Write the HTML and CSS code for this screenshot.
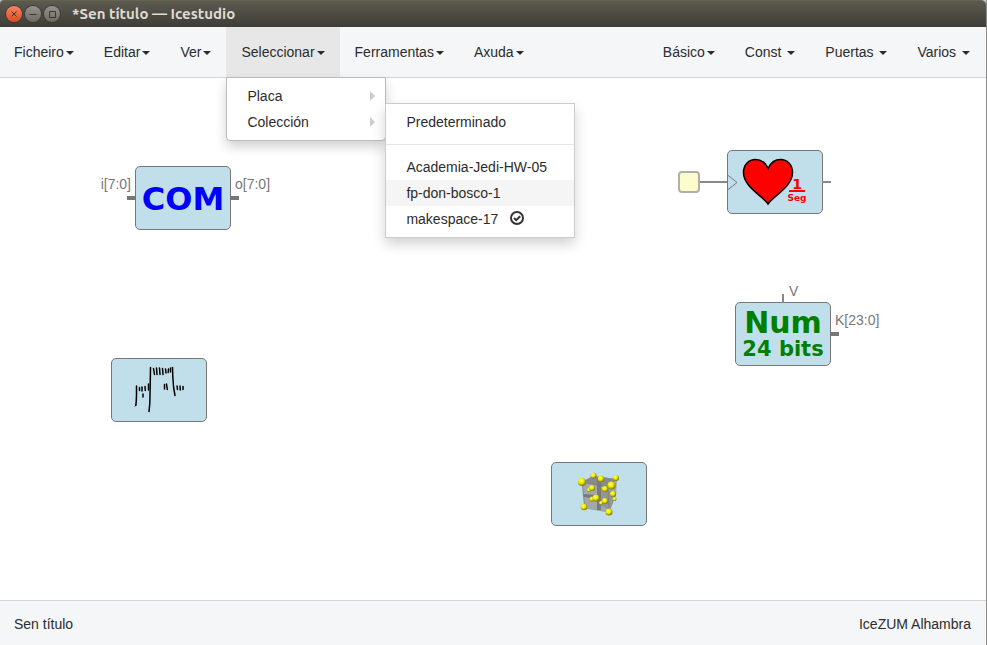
FILE: index.html
```html
<!DOCTYPE html>
<html lang="gl">
<head>
<meta charset="utf-8">
<title>*Sen título — Icestudio</title>
<link rel="stylesheet" href="styles.css">
</head>
<body>
<div class="window">
  <header class="titlebar">
    <button class="win-btn win-close" aria-label="Pechar"><svg viewBox="0 0 16 16"><path d="M5.500 5.500l5 5M10.500 5.500l-5 5"/></svg></button>
    <button class="win-btn" aria-label="Minimizar"><svg viewBox="0 0 16 16"><path d="M4.500 8.500h7"/></svg></button>
    <button class="win-btn" aria-label="Maximizar"><svg viewBox="0 0 16 16"><path d="M5.500 5.500h6v6h-6z"/></svg></button>
    <h1 class="title">*Sen título — Icestudio</h1>
  </header>

  <nav class="navbar">
    <ul class="nav">
      <li><button class="nav-link">Ficheiro<span class="caret"></span></button></li>
      <li><button class="nav-link">Editar<span class="caret"></span></button></li>
      <li><button class="nav-link">Ver<span class="caret"></span></button></li>
      <li class="open">
        <button class="nav-link" aria-expanded="true">Seleccionar<span class="caret"></span></button>
        <ul class="menu menu-main">
          <li><button class="menu-item has-sub">Placa</button></li>
          <li class="sub-host">
            <button class="menu-item has-sub">Colección</button>
            <ul class="menu menu-sub">
              <li><button class="menu-item">Predeterminado</button></li>
              <li class="divider" role="separator"></li>
              <li><button class="menu-item">Academia-Jedi-HW-05</button></li>
              <li><button class="menu-item active">fp-don-bosco-1</button></li>
              <li><button class="menu-item">makespace-17<svg class="check" viewBox="0 0 14 14"><circle cx="7" cy="7" r="6"/><path d="M4 7l2.200 2.200L10.200 5.200"/></svg></button></li>
            </ul>
          </li>
        </ul>
      </li>
      <li><button class="nav-link">Ferramentas<span class="caret"></span></button></li>
      <li><button class="nav-link">Axuda<span class="caret"></span></button></li>
    </ul>
    <ul class="nav">
      <li><button class="nav-link">Básico<span class="caret"></span></button></li>
      <li><button class="nav-link">Const <span class="caret"></span></button></li>
      <li><button class="nav-link">Puertas <span class="caret"></span></button></li>
      <li><button class="nav-link">Varios <span class="caret"></span></button></li>
    </ul>
  </nav>

  <main class="canvas">
    <div class="block block-com">
      <span class="com">COM</span>
      <span class="port port-left bus"></span><span class="port port-right bus"></span>
      <span class="label label-left">i[7:0]</span><span class="label label-right">o[7:0]</span>
    </div>

    <div class="block block-hand">
      <svg class="art" viewBox="0 0 96 64">
        <g fill="none" stroke="#000" stroke-linecap="round" stroke-linejoin="round">
          <path stroke-width="1.500" d="M25.500 28v9l-.3 7-.4 3M39.500 9.500l-.3 18-.4 18-.8 8M61.500 9.500l.3 9 .8 11 1.400 8"/>
          <path stroke-width="1.500" d="M28.500 29.500v3M31 29v4M34 28.500l.3 4M37.500 26v6M32 36v3M42.500 10.500l1 6M45.500 10l.5 6.500M48.500 10l.5 6.500M51.500 10.500l.5 6M54.500 11l.5 4M57.500 11l-.3 3.500M59.500 10v4M53.500 26.500v4.500M55.500 26l.8 5.500M66 28l.5 3.500M69 28l.3 4M72 28.500v3"/>
          <path stroke-width="1" d="M24 48l1.500-1"/>
        </g>
      </svg>
    </div>

    <div class="block block-cube">
      <svg class="art" viewBox="0 0 96 64">
        <defs>
          <radialGradient id="ball" cx=".4" cy=".35" r=".65"><stop offset="0" stop-color="#ffff58"/><stop offset=".5" stop-color="#eee800"/><stop offset="1" stop-color="#777500"/></radialGradient>
        </defs>
        <path fill="#a2a7aa" d="M31 20l11-6 24 3-1 17-7 16-25-5z"/>
        <path fill="#888b8e" d="M31 20l11-6 24 3-9 9z"/>
        <path fill="#777b7e" d="M46 17h4v31h-4zM32 32l14 1v4l-13-2zM49 33l14-1-4 7-10-2z"/>
        <path fill="#929598" d="M50 26l13 4-5 18-8-5z"/>
        <path fill="none" stroke="#777" stroke-width=".6" d="M31 20l26 5 9-9M31 20l3 26 24 4 7-20M57 25l1 24"/>
        <g fill="url(#ball)">
          <circle cx="38" cy="28" r="2"/><circle cx="41" cy="26" r="3"/><circle cx="41" cy="37" r="2.500"/>
          <circle cx="50" cy="41" r="2"/><circle cx="54" cy="39" r="3"/><circle cx="54" cy="27" r="3"/>
          <circle cx="62" cy="32" r="3"/><circle cx="63.500" cy="37" r="2"/><circle cx="42.500" cy="13.500" r="3"/>
          <circle cx="50" cy="17" r="3.200"/><circle cx="65" cy="16" r="3"/><circle cx="31" cy="20" r="4"/>
          <circle cx="60.500" cy="23.500" r="4"/><circle cx="45" cy="36" r="3.500"/><circle cx="33" cy="45" r="3.300"/>
          <circle cx="58" cy="50" r="3.500"/>
        </g>
      </svg>
    </div>

    <span class="wire"></span>
    <span class="source"></span>
    <div class="block block-heart">
      <svg class="art" viewBox="0 0 96 64">
        <path fill="none" stroke="#777" d="M0 24.500l10 8-10 8"/>
        <path fill="#f00" stroke="#000" stroke-width="1.500" d="M41 54C36 46 16.500 37 16.500 22.500C16.500 14.500 22 9.500 28.500 9.500C34 9.500 38.500 13 41 18.500C43.500 13 48 9.500 53.500 9.500C60 9.500 65.500 14.500 65.500 22.500C65.500 37 46 46 41 54z"/>
        <path fill="#f00" d="M62 40h16v2H62z"/>
        <text class="seg-text" x="70" y="39" font-size="14">1</text>
        <text class="seg-text" x="70" y="51" font-size="9">Seg</text>
      </svg>
      <span class="port port-right"></span>
    </div>

    <div class="block block-num">
      <span class="num">Num</span><span class="bits">24 bits</span>
      <span class="port port-top"></span><span class="port port-right bus"></span>
      <span class="label label-top">V</span><span class="label label-right">K[23:0]</span>
    </div>
  </main>

  <footer class="footer"><span>Sen título</span><span>IceZUM Alhambra</span></footer>
</div>
</body>
</html>
```
FILE: styles.css
```css
* { box-sizing: border-box; }
body {
  margin: 0;
  background: #c8c8c8;
  color: #2c2c2c;
  font: 14px/20px "Liberation Sans", Arial, sans-serif;
}
ul { margin: 0; padding: 0; list-style: none; }
button { font: inherit; color: inherit; border: 0; background: none; margin: 0; }

.window {
  display: flex;
  flex-direction: column;
  min-height: 100vh;
  border-right: 1px solid #8c8c8c;
}

.titlebar {
  display: flex;
  align-items: center;
  gap: 3px;
  height: 27px;
  padding: 0 0 1px 6px;
  background: linear-gradient(#5d5b50, #3d3c37);
  border-top: 1px solid #66644f;
  border-radius: 4px 5px 0 0;
}
.win-btn {
  width: 16px;
  height: 16px;
  padding: 0;
  border-radius: 50%;
  background: linear-gradient(#95938b, #6d6b64);
  box-shadow: 0 0 0 1px #3b3a35;
}
.win-close { background: linear-gradient(#f58363, #dd4d20); }
.win-btn svg { display: block; fill: none; stroke: #393832; }
.title {
  margin: 0 0 0 9px;
  color: #dfdbd2;
  font: bold 15px/20px Ubuntu, "Noto Sans", "Open Sans", sans-serif;
}

.navbar {
  display: flex;
  justify-content: space-between;
  background: #f4f6f8;
  border-bottom: 1px solid #d3d6d8;
}
.nav { display: flex; }
.nav:first-child { margin-left: -1px; }
.nav:last-child { margin-right: 1px; }
.open { position: relative; background: #e7e7e7; }
.nav-link { display: block; padding: 15px; white-space: pre; }
.caret {
  display: inline-block;
  vertical-align: middle;
  margin-left: 2px;
  border-top: 4px solid;
  border-left: 4px solid transparent;
  border-right: 4px solid transparent;
}

.menu {
  position: absolute;
  z-index: 2;
  padding: 5px 0;
  background: #fff;
  border: 1px solid #ccc;
  box-shadow: 0 6px 12px rgba(0, 0, 0, .18);
}
.menu-main { top: 100%; left: 0; width: 160px; border-color: #bbb; border-radius: 0 0 4px 4px; }
.menu-sub { top: -6px; left: 100%; width: 190px; }
.sub-host { position: relative; }
.menu-item {
  display: flex;
  align-items: center;
  width: 100%;
  padding: 3px 20px;
  text-align: left;
  white-space: nowrap;
}
.menu-item.active { background: #f5f5f5; }
.has-sub { justify-content: space-between; padding-right: 10px; }
.has-sub::after {
  content: "";
  border-left: 5px solid #ccc;
  border-top: 5px solid transparent;
  border-bottom: 5px solid transparent;
}
.divider { height: 1px; margin: 9px 0; background: #e5e5e5; }
.check { width: 14px; height: 14px; margin: -2px 0 0 12px; fill: none; stroke: #333; stroke-width: 2; }

.canvas { position: relative; flex: 1; background: #fff; }
.block {
  position: absolute;
  display: flex;
  flex-direction: column;
  align-items: center;
  justify-content: center;
  width: 96px;
  height: 64px;
  padding-top: 2px;
  background: #c0dfeb;
  border: 1px solid #777;
  border-radius: 5px;
  font-family: "DejaVu Sans", sans-serif;
  font-weight: bold;
}
.block-com { left: 135px; top: 88px; }
.block-hand { left: 111px; top: 280px; }
.block-cube { left: 551px; top: 384px; }
.block-heart { left: 727px; top: 72px; }
.block-num { left: 735px; top: 224px; }
.art { position: absolute; top: -1px; left: -1px; width: 96px; height: 64px; }
.com { color: #00f; font-size: 32px; line-height: 32px; }
.num { color: #008000; font-size: 30px; line-height: 28px; }
.bits { color: #008000; font-size: 21px; line-height: 24px; }
.seg-text { fill: #f00; text-anchor: middle; }

.port { position: absolute; background: #888; }
.port-left, .port-right { top: 30px; width: 9px; height: 2px; }
.port-left { right: 100%; }
.port-right { left: 100%; }
.port-top { left: 46px; bottom: 100%; width: 2px; height: 9px; }
.bus { top: 29px; height: 4px; background: #777; }
.label {
  position: absolute;
  color: #777;
  font: 14px/20px "Liberation Sans", Arial, sans-serif;
}
.label-left { right: 99px; top: 7px; }
.label-right { left: 99px; top: 7px; }
.label-top { left: 53px; top: -22px; }

.source {
  position: absolute;
  left: 678px;
  top: 93px;
  width: 22px;
  height: 22px;
  background: #fcfccc;
  border: 2px solid #b0b0a8;
  border-radius: 4px;
}
.wire { position: absolute; left: 699px; top: 103px; width: 28px; height: 2px; background: #888; }

.footer {
  display: flex;
  justify-content: space-between;
  padding: 13px 15px 11px 14px;
  background: #f4f6f8;
  border-top: 1px solid #d3d6d8;
}
```
